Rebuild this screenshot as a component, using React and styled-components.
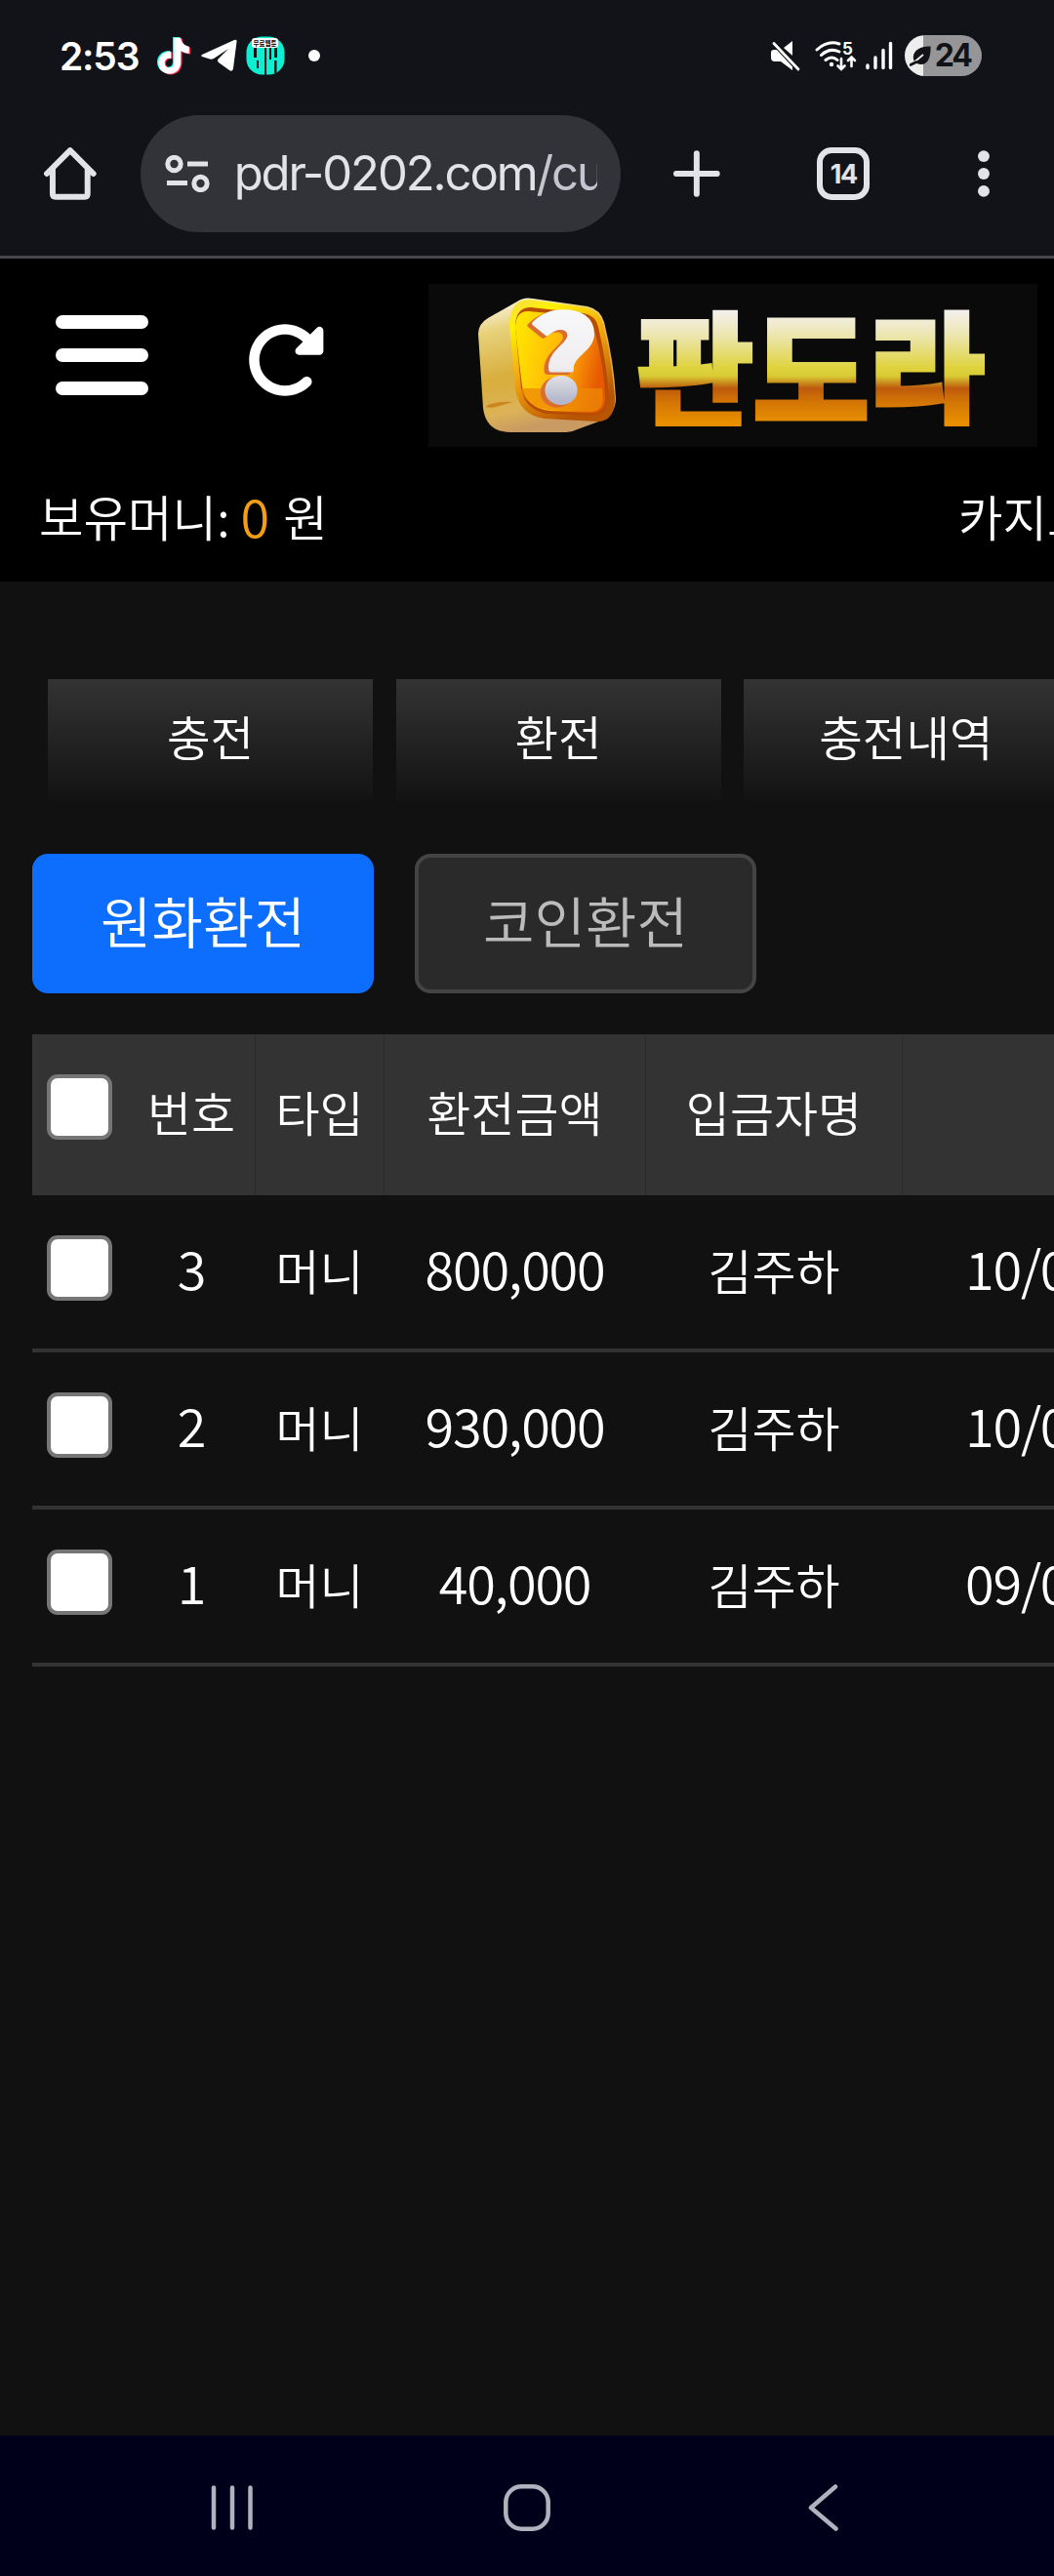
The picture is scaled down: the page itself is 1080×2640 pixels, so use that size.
import styled, { createGlobalStyle } from "styled-components";
import { FaRotateRight } from "react-icons/fa6";

const GlobalStyle = createGlobalStyle`
	* {
		box-sizing: border-box;
	}

	body {
		margin: 0;
		background: #111111;
		overflow: hidden;
		font-family: "Noto Sans CJK KR", sans-serif;
		font-weight: 350;
	}
`;

const Screen = styled.div`
	width: 1080px;
	height: 2640px;
	overflow: hidden;
	display: flex;
	flex-direction: column;
	background: #111111;
	color: #fff;
`;

const BrowserTop = styled.div`
	height: 265px;
	flex: none;
	background: #121318;
	border-bottom: 3px solid #46474c;
`;

const StatusBar = styled.div`
	height: 114px;
	padding: 0 74px 0 61px;
	display: flex;
	align-items: center;
	justify-content: space-between;
`;

const StatusGroup = styled.div`
	display: flex;
	align-items: center;
`;

const Clock = styled.span`
	width: 99px;
	font: 600 39px/1 Inter, sans-serif;
	letter-spacing: -1.2px;
`;

const Dot = styled.span`
	width: 12px;
	height: 12px;
	margin-left: 24px;
	border-radius: 50%;
	background: #fff;
`;

const Battery = styled.div`
	width: 79px;
	height: 42px;
	margin-left: 12px;
	padding: 0 11px 0 5px;
	border-radius: 21px;
	display: flex;
	align-items: center;
	justify-content: space-between;
	color: #121318;
	background: linear-gradient(90deg, #ededed 19px, #969698 19px);
	font: 700 32px/1 Inter, sans-serif;
	letter-spacing: -2px;
`;

const Toolbar = styled.div`
	height: 120px;
	margin-top: 4px;
	padding: 0 66px 0 45px;
	display: flex;
	align-items: center;
	color: #e2e2e9;
`;

const AddressBar = styled.div`
	width: 492px;
	height: 120px;
	margin: 0 53px 0 45px;
	padding: 0 24px 0 25px;
	border-radius: 60px;
	background: #323338;
	display: flex;
	align-items: center;
`;

const Url = styled.span`
	flex: 1;
	height: 70px;
	margin-left: 25px;
	overflow: hidden;
	white-space: nowrap;
	font: 400 49px/70px Inter, sans-serif;
	letter-spacing: -2.1px;
`;

const UrlPath = styled.span`
	color: #c5c5d2;
`;

const TabCount = styled.div`
	width: 54px;
	height: 54px;
	margin: 0 111px 0 99px;
	border: 6px solid #e2e2e9;
	border-radius: 15px;
	display: flex;
	align-items: center;
	justify-content: center;
	font: 700 27px/1 Inter, sans-serif;
	letter-spacing: -1.5px;
`;

const SiteHeader = styled.header`
	height: 331px;
	flex: none;
	background: #000;
`;

const HeaderRow = styled.div`
	height: 193px;
	padding: 26px 17px 0 57px;
	display: flex;
`;

const Hamburger = styled.div`
	width: 95px;
	height: 82px;
	margin-top: 32px;
	display: flex;
	flex-direction: column;
	justify-content: space-between;

	span {
		height: 14px;
		border-radius: 7px;
		background: #fff;
	}
`;

const Refresh = styled(FaRotateRight)`
	width: 84px;
	height: 84px;
	margin: 36px 0 0 98px;
`;

const Logo = styled.div`
	width: 624px;
	height: 167px;
	margin-left: auto;
	padding: 12px 0 0 50px;
	display: flex;
	background: #0a0a0a;
`;

const LogoWord = styled.div`
	height: 126px;
	margin: 8px 0 0 17px;
	white-space: nowrap;
	font-size: 129px;
	font-weight: 900;
	line-height: 126px;
	color: transparent;
	-webkit-text-stroke: 5px transparent;
	background: linear-gradient(#f3f0ee 6%, #ece6b0 26%, #dfd33f 52%, #d9cb34 59%, #bd5a0c 69%, #d27505 80%, #e88e00 96%);
	background-clip: text;
`;

const Balance = styled.div`
	padding: 0 0 0 40px;
	display: flex;
	height: 138px;
	line-height: 141px;
	font-size: 49.5px;
	white-space: nowrap;
`;

const Amount = styled.span`
	margin: 0 14px 0 11px;
	font-size: 54px;
	line-height: 139px;
	color: #f49d16;
`;

const Casino = styled.span`
	flex: none;
	margin-left: auto;
	width: 98px;
	overflow: hidden;
`;

const NavTabs = styled.nav`
	flex: none;
	margin: 100px 0 0 49px;
	display: flex;
	gap: 23.5px;
`;

const NavTab = styled.div`
	flex: none;
	width: 333px;
	height: 124px;
	display: flex;
	justify-content: center;
	font-size: 48.500px;
	line-height: 117px;
	background: linear-gradient(#333333, #131313);
`;

const Switcher = styled.div`
	flex: none;
	margin: 55px 0 0 33px;
	display: flex;
	gap: 42px;
`;

const SwitchButton = styled.div`
	width: 350px;
	height: 143px;
	border-radius: 16px;
	border: 4px solid ${(props) => (props.$active ? "#0d6efd" : "#444444")};
	background: ${(props) => (props.$active ? "#0d6efd" : "#2a2a2a")};
	color: ${(props) => (props.$active ? "#fff" : "#bbbbbb")};
	text-align: center;
	font-size: 57px;
	line-height: 126px;
`;

const Table = styled.div`
	flex: none;
	width: 1300px;
	margin: 42px 0 0 33px;
	font-size: 49px;
`;

const Row = styled.div`
	display: grid;
	grid-template-columns: 98px 131px 132px 268px 263px 1fr;
	height: ${(props) => (props.$head ? "165px" : "161px")};
	background: ${(props) => (props.$head ? "#333333" : "none")};
	border-bottom: ${(props) => (props.$head ? "none" : "4px solid #333333")};
`;

const Cell = styled.div`
	text-align: center;
	white-space: nowrap;
	line-height: ${(props) => (props.$head ? "158px" : "151px")};
	border-right: ${(props) => (props.$head ? "1px solid #2b2b2b" : "1px solid transparent")};
`;

const CheckCell = styled.div`
	padding: 41px 0 0 15px;
`;

const Checkbox = styled.div`
	width: 67px;
	height: 67px;
	border: 4px solid #767676;
	border-radius: 11px;
	background: #fff;
`;

const NumberCell = styled(Cell)`
	font-size: 54px;
	line-height: 148px;
	letter-spacing: -1.2px;
`;

const DateCell = styled(NumberCell)`
	padding-left: 64px;
	text-align: left;
`;

const NavigationBar = styled.div`
	height: 144px;
	margin-top: auto;
	flex: none;
	padding: 4px 0 0 216px;
	display: flex;
	align-items: center;
	background: #00001b;
	color: #b2b1be;
`;

const HomeKey = styled.svg`
	margin: 0 264px 0 256px;
`;

const withdrawals = [
	{ no: 3, type: "머니", amount: "800,000", name: "김주하", date: "10/0" },
	{ no: 2, type: "머니", amount: "930,000", name: "김주하", date: "10/0" },
	{ no: 1, type: "머니", amount: "40,000", name: "김주하", date: "09/0" },
];

function TikTokIcon() {
	const note = "M17 1h7c.5 5 4 8.500 8.500 9v7c-3.300 0-6.200-1-8.500-2.700V26c0 7-5 12-11.500 12S1 33 1 26.500 6.500 14.500 14 15v7c-4-.7-6.500 1.500-6.500 4.500s2 5 5 5 4.500-2.200 4.500-5.500z";
	return (
		<svg width="36" height="40" viewBox="0 0 36 40">
			<path d={note} fill="#25f4ee" />
			<path d={note} fill="#fe2c55" transform="translate(2.500 1.500)" />
			<path d={note} fill="#fff" transform="translate(1.300 .8)" />
		</svg>
	);
}

const TelegramIcon = styled.svg`
	margin-left: 10px;
`;

const Badge = styled.svg`
	margin-left: 9px;
`;

function AppBadge() {
	return (
		<Badge width="40" height="40" viewBox="0 0 40 40">
			<rect x=".5" y=".5" width="39" height="39" rx="16" fill="#0cefd3" />
			<path d="M19 11h2v29h-2zM8 12h3v10H8zM11 25h2v8h-2zM24 12h2v12h-2zM29 12h3v10h-3zM29 25h2.500v13H29z" fill="#121318" />
			<rect x="6" y="2" width="27" height="10" rx="3" fill="#fff" />
			<text x="19.500" y="9.500" textAnchor="middle" fontSize="6.500" fontWeight="700" fill="#000">무료웹툰</text>
		</Badge>
	);
}

function MuteIcon() {
	return (
		<svg width="30" height="31" viewBox="0 0 30 31">
			<path d="M0 12q0-3 3-3h5L22 23v7L10 21H4q-4 0-4-4zM13 7L22 0v15z" fill="#fff" />
			<path d="M3 1.500L28.500 29" stroke="#121318" strokeWidth="6" />
			<path d="M3 2.500L28 29" stroke="#fff" strokeWidth="2.800" strokeLinecap="round" />
		</svg>
	);
}

const Wifi = styled.svg`
	margin-left: 15px;
`;

function WifiIcon() {
	return (
		<Wifi width="43" height="33" viewBox="0 0 43 33" fill="none" stroke="#fff" strokeWidth="3" strokeLinecap="round">
			<path d="M2 10Q13 0 25 4M6.500 15.500Q15 7.500 25 12M11 20.500q6.500-5 12 0" />
			<circle cx="17" cy="25" r="2.200" fill="#fff" stroke="none" />
			<path d="M27 19v10M23.500 26.500L27 30l3.500-3.500M37.500 27V18M34 21l3.500-3.500L41 21" strokeWidth="2.600" />
			<text x="28" y="14.500" fontFamily="Inter" fontSize="17" fontWeight="700" fill="#fff" stroke="none">5</text>
		</Wifi>
	);
}

const Signal = styled.svg`
	margin-left: 9px;
`;

function SignalIcon() {
	return (
		<Signal width="28" height="30" viewBox="0 0 28 30" stroke="#fff" strokeWidth="3.400" strokeLinecap="round">
			<path d="M2 25v2.500M10 17v10.500M18 9.500v18M25.500 2.500v25" />
		</Signal>
	);
}

function LeafIcon() {
	return (
		<svg width="22" height="22" viewBox="0 0 22 22">
			<path d="M21.500 1.500C22 12 19 20 12 20 6 20 3 16 4 11c1-6 8-10 17.500-9.500z" fill="#121318" />
			<path d="M5 17.500L14 10" stroke="#ededed" strokeWidth="1.800" />
			<path d="M1 20.500l6-3" stroke="#121318" strokeWidth="2.600" strokeLinecap="round" />
		</svg>
	);
}

function LogoCube() {
	return (
		<svg width="147" height="143" viewBox="21 13 147 143">
			<defs>
				<linearGradient id="side" x1="0" y1="0" x2=".25" y2="1">
					<stop offset="0" stopColor="#fff" />
					<stop offset=".25" stopColor="#e8d27c" />
					<stop offset=".6" stopColor="#d8ae3c" />
					<stop offset=".85" stopColor="#dcb257" />
					<stop offset="1" stopColor="#c99a62" />
				</linearGradient>
				<linearGradient id="rim" x1="0" y1="0" x2=".5" y2="1">
					<stop offset="0" stopColor="#f6dc50" />
					<stop offset=".2" stopColor="#fff100" />
					<stop offset=".55" stopColor="#f4a50f" />
					<stop offset="1" stopColor="#b85503" />
				</linearGradient>
				<linearGradient id="inside" x1="0" y1=".1" x2="1" y2=".35">
					<stop offset="0" stopColor="#ffe900" />
					<stop offset=".6" stopColor="#ffb109" />
					<stop offset="1" stopColor="#e85a02" />
				</linearGradient>
				<linearGradient id="mark" x1="0" y1="0" x2="0" y2="1">
					<stop offset="0" stopColor="#fff" />
					<stop offset=".6" stopColor="#efedf0" />
					<stop offset=".8" stopColor="#b4b8ca" />
				</linearGradient>
			</defs>
			<path d="M22 52Q22 42 32 36L62 19Q69 14 78 16L134 24Q147 27 151 40Q161 80 163 118Q163 133 151 140L121 151Q117 153 108 153H55Q30 153 27 128Z" fill="url(#side)" />
			<path d="M29 127q7-6 29-5l-22 6z" fill="#cb8620" />
			<path d="M54 42Q55 16 75 17L130 25Q146 28 150 42Q159 80 162 118Q162 142 144 142L90 139Q63 135 60 108Z" fill="url(#rim)" />
			<path d="M60 45Q60 25 76 25L130 31Q142 33 145 45Q154 84 156 118Q155 135 142 136L92 134Q69 129 66 108Z" fill="#b94d03" />
			<path d="M60 47Q60 28 74 29L126 34Q138 36 141 48Q151 84 152 118Q152 132 138 133L95 131Q71 128 67 106Z" fill="url(#inside)" />
			<path d="M65 108h84q4 23-11 24L95 130Q71 127 65 108z" fill="#ee8905" opacity=".75" />
			<g fontFamily="Noto Sans CJK KR" fontWeight="900" fontSize="118" strokeLinejoin="round">
				<text x="69" y="123" fill="#d96e30" stroke="#d96e30" strokeWidth="5" textLength="72" lengthAdjust="spacingAndGlyphs">?</text>
				<text x="73" y="121" fill="url(#mark)" stroke="url(#mark)" strokeWidth="4" textLength="72" lengthAdjust="spacingAndGlyphs">?</text>
			</g>
		</svg>
	);
}

function App() {
	return (
		<Screen>
			<GlobalStyle />
			<BrowserTop>
				<StatusBar>
					<StatusGroup>
						<Clock>2:53</Clock>
						<TikTokIcon />
						<TelegramIcon width="37" height="34" viewBox="0 0 37 34">
							<path d="M1 16L34 1q3-1 2.500 2L33 30q-.5 4-4 2l-11-8q-2-2 0-4L28 10 13 20q-2 1-4 .5L1 18q-1.500-1 0-2z" fill="#fff" />
						</TelegramIcon>
						<AppBadge />
						<Dot />
					</StatusGroup>
					<StatusGroup>
						<MuteIcon />
						<WifiIcon />
						<SignalIcon />
						<Battery>
							<LeafIcon />
							24
						</Battery>
					</StatusGroup>
				</StatusBar>
				<Toolbar>
					<svg width="54" height="54" viewBox="0 0 54 54" fill="none" stroke="currentColor" strokeWidth="6" strokeLinecap="round" strokeLinejoin="round">
						<path d="M3 27L27 3l24 24M9 22v26q0 3 3 3h30q3 0 3-3V22" />
					</svg>
					<AddressBar>
						<svg width="46" height="38" viewBox="0 0 46 38" fill="none" stroke="currentColor" strokeWidth="5">
							<circle cx="9.500" cy="9" r="6.700" />
							<circle cx="36.500" cy="29" r="6.700" />
							<path d="M23 9h21M2 28.500h21" />
						</svg>
						<Url>
							pdr-0202.com<UrlPath>/cu</UrlPath>
						</Url>
					</AddressBar>
					<svg width="50" height="50" viewBox="0 0 50 50" stroke="currentColor" strokeWidth="6" strokeLinecap="round">
						<path d="M25 4v42M4 25h42" />
					</svg>
					<TabCount>14</TabCount>
					<svg width="12" height="50" viewBox="0 0 12 50" fill="currentColor">
						<circle cx="6" cy="7" r="6" />
						<circle cx="6" cy="25" r="6" />
						<circle cx="6" cy="43" r="6" />
					</svg>
				</Toolbar>
			</BrowserTop>

			<SiteHeader>
				<HeaderRow>
					<Hamburger>
						<span />
						<span />
						<span />
					</Hamburger>
					<Refresh />
					<Logo>
						<LogoCube />
						<LogoWord>판도라</LogoWord>
					</Logo>
				</HeaderRow>
				<Balance>
					보유머니:<Amount>0</Amount>원
					<Casino>카지노</Casino>
				</Balance>
			</SiteHeader>

			<NavTabs>
				<NavTab>충전</NavTab>
				<NavTab>환전</NavTab>
				<NavTab>충전내역</NavTab>
			</NavTabs>
			<Switcher>
				<SwitchButton $active>원화환전</SwitchButton>
				<SwitchButton>코인환전</SwitchButton>
			</Switcher>

			<Table>
				<Row $head>
					<CheckCell>
						<Checkbox />
					</CheckCell>
					<Cell $head>번호</Cell>
					<Cell $head>타입</Cell>
					<Cell $head>환전금액</Cell>
					<Cell $head>입금자명</Cell>
				</Row>
				{withdrawals.map((item) => (
					<Row key={item.no}>
						<CheckCell>
							<Checkbox />
						</CheckCell>
						<NumberCell>{item.no}</NumberCell>
						<Cell>{item.type}</Cell>
						<NumberCell>{item.amount}</NumberCell>
						<Cell>{item.name}</Cell>
						<DateCell>{item.date}</DateCell>
					</Row>
				))}
			</Table>

			<NavigationBar>
				<svg width="44" height="48" viewBox="0 0 44 48" stroke="currentColor" strokeWidth="4.500" strokeLinecap="round">
					<path d="M3 3.500v41M22 3.500v41M40.500 3.500v41" />
				</svg>
				<HomeKey width="48" height="48" viewBox="0 0 48 48" fill="none" stroke="currentColor" strokeWidth="4.500">
					<rect x="2.300" y="2.300" width="43.400" height="43.400" rx="16" />
				</HomeKey>
				<svg width="31" height="48" viewBox="0 0 31 48" fill="none" stroke="currentColor" strokeWidth="4.500" strokeLinecap="round" strokeLinejoin="round">
					<path d="M28 2.500L3 24l25.500 21.500" />
				</svg>
			</NavigationBar>
		</Screen>
	);
}

export default App;
